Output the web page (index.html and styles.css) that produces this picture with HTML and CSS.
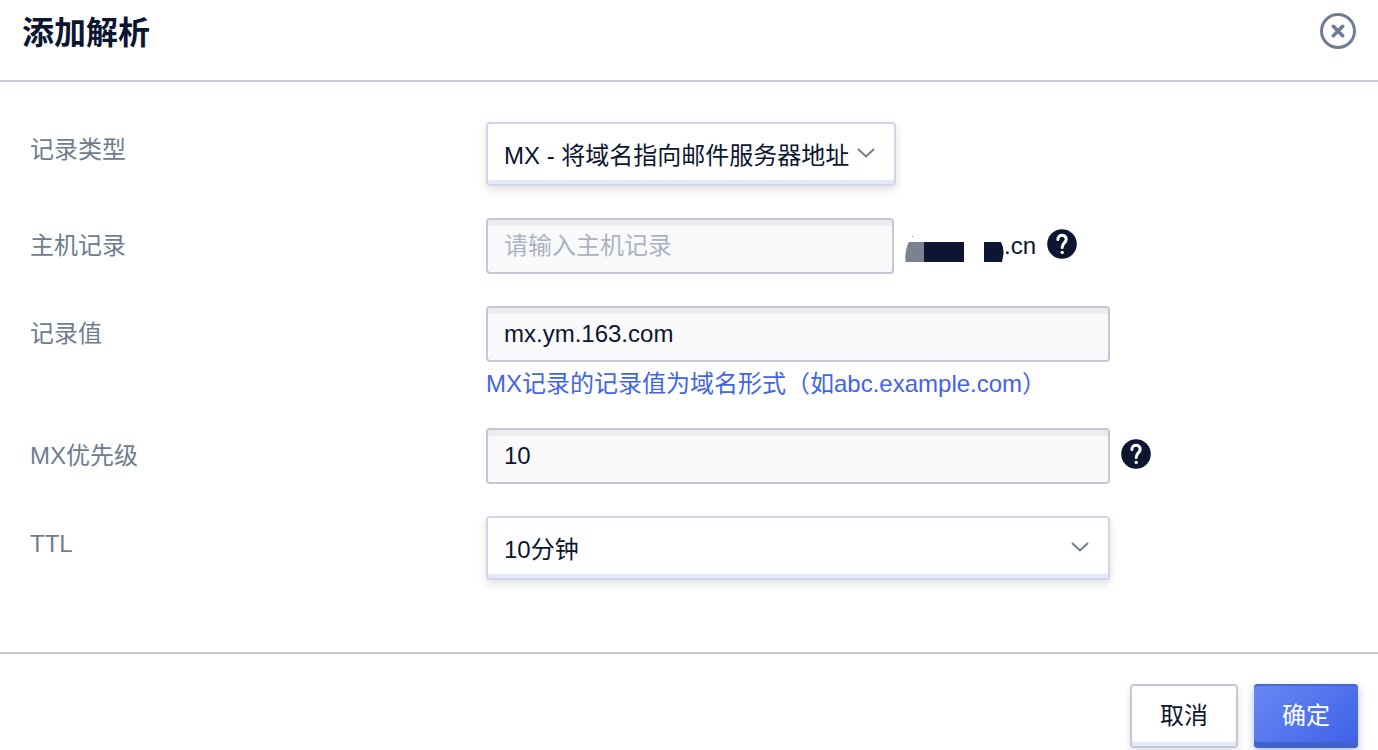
FILE: index.html
```html
<!DOCTYPE html>
<html lang="zh-CN">
<head>
<meta charset="utf-8">
<meta name="viewport" content="width=device-width, initial-scale=1">
<title>添加解析</title>
<link rel="stylesheet" href="styles.css">
</head>
<body>
<form class="dialog">
  <header class="dialog-header">
    <h1 class="dialog-title">添加解析</h1>
    <button class="icon-button" type="button" aria-label="关闭">
      <svg class="close-icon" viewBox="0 0 36 36" fill="none" stroke="currentColor" aria-hidden="true">
        <circle cx="18" cy="18" r="16.5" stroke-width="3"/>
        <path d="M13.3 13.3l9.4 9.4M22.7 13.3l-9.4 9.4" stroke-width="3.6" stroke-linecap="round"/>
      </svg>
    </button>
  </header>

  <div class="form-body">
    <div class="row">
      <label class="label" for="type">记录类型</label>
      <div class="field">
        <div class="select-wrap select-wrap-medium">
          <select class="select" id="type"><option>MX - 将域名指向邮件服务器地址</option></select>
          <svg class="chevron" viewBox="0 0 18 12" aria-hidden="true"><path d="M1 2L9 9.500 17 2"/></svg>
        </div>
      </div>
    </div>

    <div class="row">
      <label class="label" for="host">主机记录</label>
      <div class="field">
        <input class="input input-medium" id="host" type="text" placeholder="请输入主机记录">
        <span class="domain">
          <svg class="domain-mask" viewBox="0 0 99 32" aria-hidden="true">
            <path d="M4 12h19v20H0.5Q-0.5 20 4 12z" fill="#7b818f"/>
            <path d="M19 12h40v20H19zM79 12h17q3 6 2.500 12l-1.500 8H79z" fill="#0c1631"/>
            <path d="M7 6h1v1H7z" fill="#9ba0ab"/>
          </svg>.cn</span>
        <button class="icon-button" type="button" aria-label="主机记录说明">
          <svg class="help-icon" viewBox="0 0 30 30" aria-hidden="true">
            <circle cx="15" cy="15" r="14.800" fill="#0c1631"/>
            <path d="M10.900 10.400C10.900 4.900 19.200 5 19.200 10.200C19.200 13.800 15.200 13.600 15.200 18.600" fill="none" stroke="#fff" stroke-width="3" stroke-linecap="round"/>
            <circle cx="15.200" cy="23.400" r="1.700" fill="#fff"/>
          </svg>
        </button>
      </div>
    </div>

    <div class="row">
      <label class="label" for="value">记录值</label>
      <div>
        <div class="field"><input class="input" id="value" type="text" value="mx.ym.163.com" aria-describedby="value-hint"></div>
        <p class="hint" id="value-hint">MX记录的记录值为域名形式（如abc.example.com）</p>
      </div>
    </div>

    <div class="row">
      <label class="label" for="priority">MX优先级</label>
      <div class="field">
        <input class="input" id="priority" type="text" value="10">
        <button class="icon-button" type="button" aria-label="MX优先级说明">
          <svg class="help-icon" viewBox="0 0 30 30" aria-hidden="true">
            <circle cx="15" cy="15" r="14.800" fill="#0c1631"/>
            <path d="M10.900 10.400C10.900 4.900 19.200 5 19.200 10.200C19.200 13.800 15.200 13.600 15.200 18.600" fill="none" stroke="#fff" stroke-width="3" stroke-linecap="round"/>
            <circle cx="15.200" cy="23.400" r="1.700" fill="#fff"/>
          </svg>
        </button>
      </div>
    </div>

    <div class="row">
      <label class="label" for="ttl">TTL</label>
      <div class="field">
        <div class="select-wrap">
          <select class="select" id="ttl"><option>10分钟</option></select>
          <svg class="chevron" viewBox="0 0 18 12" aria-hidden="true"><path d="M1 2L9 9.500 17 2"/></svg>
        </div>
      </div>
    </div>
  </div>

  <footer class="dialog-footer">
    <button class="button" type="button">取消</button>
    <button class="button button-primary" type="submit">确定</button>
  </footer>
</form>
</body>
</html>
```
FILE: styles.css
```css
* {
  box-sizing: border-box;
}

body {
  margin: 0;
  background: #fff;
  color: #0c1631;
  font: 24px/32px "Liberation Sans", "Noto Sans CJK SC", sans-serif;
}

button,
input,
select {
  font: inherit;
  color: inherit;
}

.dialog-header {
  display: flex;
  align-items: flex-start;
  justify-content: space-between;
  padding: 13px 22px 27px;
  border-bottom: 2px solid #c5c9da;
}

.dialog-title {
  margin: 0;
  font-size: 32px;
  line-height: 40px;
  font-weight: 700;
}

.icon-button {
  display: flex;
  flex: none;
  padding: 0;
  border: 0;
  background: none;
  color: #707c90;
  cursor: pointer;
}

.close-icon {
  width: 36px;
  height: 36px;
}

.form-body {
  display: flex;
  flex-direction: column;
  gap: 32px;
  padding: 40px 30px 72px;
}

.row {
  display: grid;
  grid-template-columns: 456px 1fr;
}

.label {
  color: #707c90;
  line-height: 56px;
}

.field {
  display: flex;
  align-items: center;
  gap: 11px;
}

.input {
  width: 624px;
  height: 56px;
  padding: 0 16px;
  border: 2px solid #c3c8d9;
  border-radius: 4px;
  background: #fafafc;
  box-shadow: inset 0 6px #ececee;
  outline: none;
}

.input-medium {
  width: 408px;
}

.input::placeholder {
  color: #aab3c3;
  opacity: 1;
}

.select-wrap {
  position: relative;
  width: 624px;
}

.select-wrap-medium {
  width: 410px;
}

.select {
  display: block;
  width: 100%;
  height: 64px;
  padding: 4px 40px 0 16px;
  border: 2px solid #d3d6ea;
  border-radius: 4px;
  appearance: none;
  background: #fff;
  box-shadow: inset 0 -4px #e4e8fb, 0 4px 8px rgba(0, 0, 0, 0.12);
}

.chevron {
  position: absolute;
  top: 25px;
  right: 21px;
  width: 18px;
  height: 12px;
  fill: none;
  stroke: #707c90;
  stroke-width: 2;
  pointer-events: none;
}

.domain {
  display: flex;
  align-items: center;
}

.domain-mask {
  width: 99px;
  height: 32px;
}

.help-icon {
  width: 30px;
  height: 30px;
  margin-bottom: 4px;
}

.hint {
  margin: 10px 0 0;
  color: #4165e8;
  line-height: 24px;
}

.dialog-footer {
  display: flex;
  justify-content: flex-end;
  gap: 16px;
  padding: 30px 20px 2px;
  border-top: 2px solid #c5c9da;
}

.button {
  height: 64px;
  padding: 0 28px;
  border: 2px solid #c3c8d9;
  border-radius: 4px;
  background: #fff;
  box-shadow: inset 0 -4px #e4e8fb, 0 4px 8px rgba(0, 0, 0, 0.12);
  cursor: pointer;
}

.button-primary {
  border: 0;
  background: linear-gradient(135deg, #6888f2, #3d61e8);
  box-shadow: inset 0 2px #4868d2, inset 0 -6px #4262cb, 0 4px 8px rgba(61, 97, 232, 0.4);
  color: #fff;
}
```
